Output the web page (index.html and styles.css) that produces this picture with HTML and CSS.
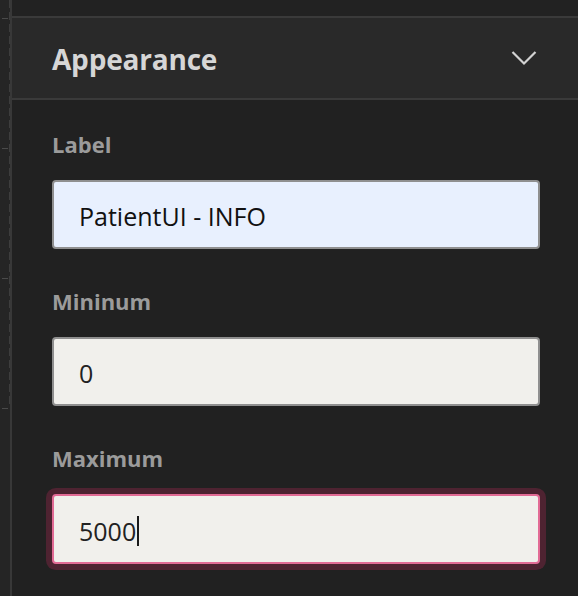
FILE: index.html
```html
<!DOCTYPE html>
<html lang="en">
<head>
<meta charset="utf-8">
<title>Appearance</title>
<link rel="stylesheet" href="styles.css">
</head>
<body>
<div class="rail">
  <div class="ticks">
    <span class="tick"></span>
    <span class="tick"></span>
    <span class="tick"></span>
    <span class="tick"></span>
  </div>
  <div class="rail-line"></div>
</div>
<div class="panel">
  <div class="panel-top"></div>
  <div class="section-header">
    <h2 class="section-title">Appearance</h2>
    <svg class="chevron" width="26" height="16" viewBox="0 0 26 16" aria-hidden="true">
      <path d="M1.5 2 L13 13.5 L24.5 2" fill="none" stroke="#d2d2d2" stroke-width="2.2"/>
    </svg>
  </div>
  <div class="fields">
    <div class="field">
      <div class="field-label">Label</div>
      <div class="input input-autofill" role="textbox">PatientUI - INFO</div>
    </div>
    <div class="field">
      <div class="field-label">Mininum</div>
      <div class="input" role="textbox">0</div>
    </div>
    <div class="field">
      <div class="field-label">Maximum</div>
      <div class="input input-focus" role="textbox">5000<span class="caret"></span></div>
    </div>
  </div>
</div>
</body>
</html>
```

FILE: styles.css
```css
* { box-sizing: border-box; }

html, body {
  margin: 0;
  height: 100%;
}

body {
  background: #212121;
  display: flex;
  font-family: "Open Sans", "Noto Sans", sans-serif;
  overflow: hidden;
}

.rail {
  width: 10px;
  background: #252525;
  display: flex;
  flex-shrink: 0;
}

.ticks {
  width: 9px;
  display: flex;
  flex-direction: column;
  padding-top: 18px;
  gap: 129px;
}

.tick {
  display: block;
  width: 6px;
  height: 1px;
  margin-left: 2px;
  background: #4a4a4a;
}

.rail-line {
  width: 1px;
  height: 408px;
  background: repeating-linear-gradient(to bottom, #3d3d3d 0 8px, transparent 8px 12px);
}

.panel {
  flex: 1;
  border-left: 2px solid #383838;
  display: flex;
  flex-direction: column;
}

.panel-top {
  height: 16px;
  background: #222222;
}

.section-header {
  height: 84px;
  border-top: 2px solid #3a3a3a;
  border-bottom: 2px solid #3a3a3a;
  background: #292929;
  display: flex;
  align-items: center;
  justify-content: space-between;
  padding: 0 41px 0 40px;
}

.section-title {
  margin: 0;
  font-size: 28px;
  font-weight: 700;
  color: #d6d6d6;
  letter-spacing: -0.2px;
  padding-top: 1px;
}

.chevron {
  display: block;
}

.fields {
  padding: 29px 38px 0 40px;
  display: flex;
  flex-direction: column;
  gap: 37px;
}

.field {
  display: flex;
  flex-direction: column;
  gap: 21px;
}

.field-label {
  font-size: 22px;
  font-weight: 700;
  color: #9b9b9b;
  line-height: 30px;
}

.input {
  height: 69px;
  border: 2px solid #8f8f8f;
  border-radius: 4px;
  background: #f1f0ec;
  color: #222222;
  font-size: 25px;
  padding: 3px 0 0 25px;
  display: flex;
  align-items: center;
}

.input-autofill {
  background: #e8f0fe;
  color: #111111;
}

.input-focus {
  height: 70px;
  border-color: #e26b95;
  box-shadow: 0 0 0 6px #4e2331;
}

.caret {
  display: inline-block;
  width: 2px;
  height: 30px;
  background: #1a1a1a;
  margin-left: 1px;
}
```
